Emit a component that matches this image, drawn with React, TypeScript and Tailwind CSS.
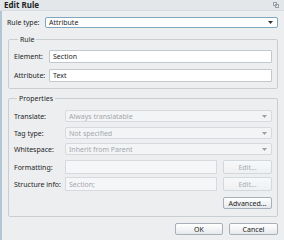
import React from "react";

const font = { fontFamily: '"Noto Sans", "DejaVu Sans", sans-serif' };

function Arrow({ muted }: { muted?: boolean }) {
  return (
    <svg width="5" height="3" viewBox="0 0 5 3" className="shrink-0">
      <path d="M0 0h5L2.5 3z" fill={muted ? "#9aa0a6" : "#333"} />
    </svg>
  );
}

function DisabledSelect({ value }: { value: string }) {
  return (
    <div className="flex-1 h-[12px] flex items-center justify-between pl-[3px] pr-[4px] bg-[#f3f4f6] border border-[#d6dade] rounded-[2px] text-[#a3a7ab]">
      <span>{value}</span>
      <Arrow muted />
    </div>
  );
}

function Btn({ label, disabled, className = "" }: { label: string; disabled?: boolean; className?: string }) {
  return (
    <div
      className={`flex items-center justify-center rounded-[2px] border bg-gradient-to-b ${
        disabled
          ? "border-[#d3d8dc] from-[#f7f8f9] to-[#eef0f2] text-[#a9adb1]"
          : "border-[#a7b0b8] from-[#ffffff] to-[#e6e9ec] text-[#222]"
      } ${className}`}
    >
      {label}
    </div>
  );
}

export default function App() {
  return (
    <div className="w-[284px] h-[240px] bg-[#eceef0] text-[7px] leading-none text-[#1e1e1e] flex flex-col overflow-hidden whitespace-nowrap" style={font}>
      {/* title bar */}
      <div className="h-[11px] shrink-0 flex items-center justify-between pl-[4px] pr-[5px] bg-[#e4e7ea] border-b border-[#d9dde1]">
        <span className="font-bold text-[8px] text-[#222]">Edit Rule</span>
        <svg width="6" height="6" viewBox="0 0 6 6">
          <rect x="0.5" y="0.5" width="3" height="3" fill="none" stroke="#9aa1a8" />
          <rect x="2.5" y="2.5" width="3" height="3" fill="none" stroke="#9aa1a8" />
        </svg>
      </div>

      <div className="flex-1 flex flex-col border-l-2 border-[#b3c6d4] pl-[5px] pr-[6px]">
        {/* rule type */}
        <div className="flex items-center mt-[6px] h-[11px]">
          <span className="w-[38px]">Rule type:</span>
          <div className="flex-1 h-[11px] flex items-center justify-between pl-[3px] pr-[4px] bg-white border border-[#7ea6bf] rounded-[2px]">
            <span>Attribute</span>
            <Arrow />
          </div>
        </div>

        {/* rule group */}
        <fieldset className="mt-[8px] ml-[1px] border border-[#c9ced3] rounded-[2px] pl-[5px] pr-[5px] pt-[7px] pb-[6px] flex flex-col gap-[6px]">
          <legend className="ml-[4px] px-[2px]">Rule</legend>
          <div className="flex items-center">
            <span className="w-[35px]">Element:</span>
            <div className="flex-1 h-[13px] flex items-center pl-[3px] bg-white border border-[#c2c8cd] rounded-[1px]">Section</div>
          </div>
          <div className="flex items-center">
            <span className="w-[35px]">Attribute:</span>
            <div className="flex-1 h-[13px] flex items-center pl-[3px] bg-white border border-[#c2c8cd] rounded-[1px]">Text</div>
          </div>
        </fieldset>

        {/* properties group */}
        <fieldset className="mt-[6px] ml-[1px] border border-[#c9ced3] rounded-[2px] pl-[5px] pr-[5px] pt-[8px] pb-[7px] flex flex-col">
          <legend className="ml-[3px] px-[2px]">Properties</legend>
          <div className="flex items-center">
            <span className="w-[51px]">Translate:</span>
            <DisabledSelect value="Always translatable" />
          </div>
          <div className="flex items-center mt-[5px]">
            <span className="w-[51px]">Tag type:</span>
            <DisabledSelect value="Not specified" />
          </div>
          <div className="flex items-center mt-[4px]">
            <span className="w-[51px]">Whitespace:</span>
            <DisabledSelect value="Inherit from Parent" />
          </div>
          <div className="flex items-center mt-[5px]">
            <span className="w-[51px]">Formatting:</span>
            <div className="flex-1 h-[14px] bg-[#f5f6f7] border border-[#d6dade]" />
            <Btn label="Edit..." disabled className="ml-[6px] w-[49px] h-[14px]" />
          </div>
          <div className="flex items-center mt-[3px]">
            <span className="w-[51px]">Structure info:</span>
            <div className="flex-1 h-[14px] flex items-center pl-[3px] bg-[#f5f6f7] border border-[#d6dade] text-[#a3a7ab]">Section;</div>
            <Btn label="Edit..." disabled className="ml-[6px] w-[49px] h-[14px]" />
          </div>
          <div className="flex justify-end mt-[6px]">
            <Btn label="Advanced..." className="w-[49px] h-[12px]" />
          </div>
        </fieldset>

        {/* footer */}
        <div className="flex justify-end gap-[6px] mt-[6px]">
          <Btn label="OK" className="w-[48px] h-[12px]" />
          <Btn label="Cancel" className="w-[49px] h-[12px]" />
        </div>
      </div>
    </div>
  );
}
